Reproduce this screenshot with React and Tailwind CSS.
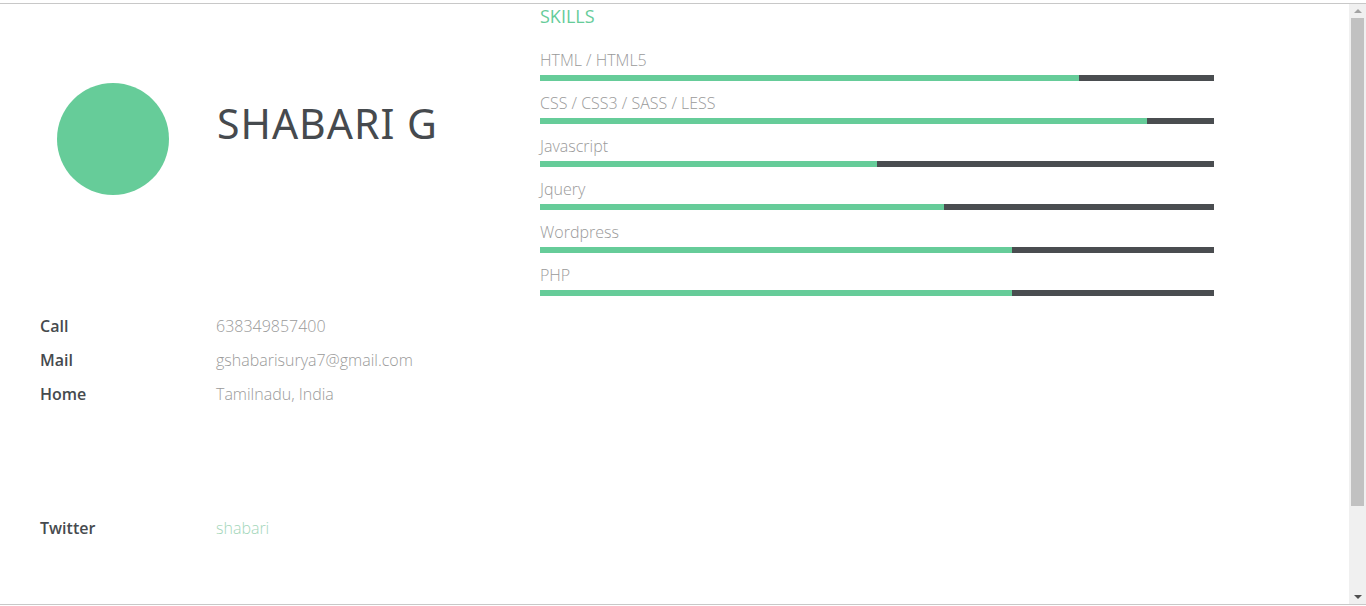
import React from 'react';

const skills = [
  { name: 'HTML / HTML5', pct: 80 },
  { name: 'CSS / CSS3 / SASS / LESS', pct: 90 },
  { name: 'Javascript', pct: 50 },
  { name: 'Jquery', pct: 60 },
  { name: 'Wordpress', pct: 70 },
  { name: 'PHP', pct: 70 },
];

const contacts = [
  { label: 'Call', value: '638349857400' },
  { label: 'Mail', value: 'gshabarisurya7@gmail.com' },
  { label: 'Home', value: 'Tamilnadu, India' },
];

export default function App() {
  return (
    <div className="w-[1366px] h-[606px] bg-white pt-[3px] overflow-hidden font-['Open_Sans',sans-serif]">
      <div className="h-[602px] border-y border-[#c8c8c8] flex">
        {/* page */}
        <div className="flex-1 flex">
          {/* left column */}
          <div className="w-[540px] shrink-0">
            <div className="flex items-start pt-[79px]">
              <div className="ml-[57px] w-[112px] h-[112px] rounded-full bg-[#66cc99]" />
              <h1 className="ml-[48px] mt-[16px] text-[41px] leading-[48px] tracking-[1px] text-[#464a4e] font-['Noto_Sans',sans-serif]">
                SHABARI G
              </h1>
            </div>
            <div className="mt-[114px] pl-[40px]">
              {contacts.map((c) => (
                <div key={c.label} className="flex h-[34px] items-center text-[16px]">
                  <span className="w-[176px] font-semibold text-[#464a4e]">{c.label}</span>
                  <span className="font-light text-[#9a9a9a]">{c.value}</span>
                </div>
              ))}
              <div className="flex h-[34px] items-center text-[16px] mt-[100px]">
                <span className="w-[176px] font-semibold text-[#464a4e]">Twitter</span>
                <span className="font-light text-[#a3d6b9]">shabari</span>
              </div>
            </div>
          </div>

          {/* right column */}
          <div className="w-[674px] shrink-0">
            <h2 className="text-[18px] leading-[24px] text-[#66cc99]">SKILLS</h2>
            <div className="mt-[20px] flex flex-col gap-[10px]">
              {skills.map((s) => (
                <div key={s.name}>
                  <div className="text-[16px] leading-[24px] font-light text-[#9a9a9a]">{s.name}</div>
                  <div className="mt-[3px] h-[6px] bg-[#4a4d50]">
                    <div className="h-full bg-[#66cc99]" style={{ width: `${s.pct}%` }} />
                  </div>
                </div>
              ))}
            </div>
          </div>
        </div>

        {/* browser scrollbar */}
        <div className="w-[17px] shrink-0 bg-[#f0f0f0] flex flex-col items-center">
          <div className="h-[14px] flex items-center justify-center">
            <div className="w-0 h-0 border-x-[4px] border-x-transparent border-b-[4px] border-b-[#a3a3a3]" />
          </div>
          <div className="w-[13px] h-[488px] bg-[#c1c1c1]" />
          <div className="flex-1" />
          <div className="h-[14px] flex items-center justify-center">
            <div className="w-0 h-0 border-x-[4px] border-x-transparent border-t-[4px] border-t-[#505050]" />
          </div>
        </div>
      </div>
    </div>
  );
}
